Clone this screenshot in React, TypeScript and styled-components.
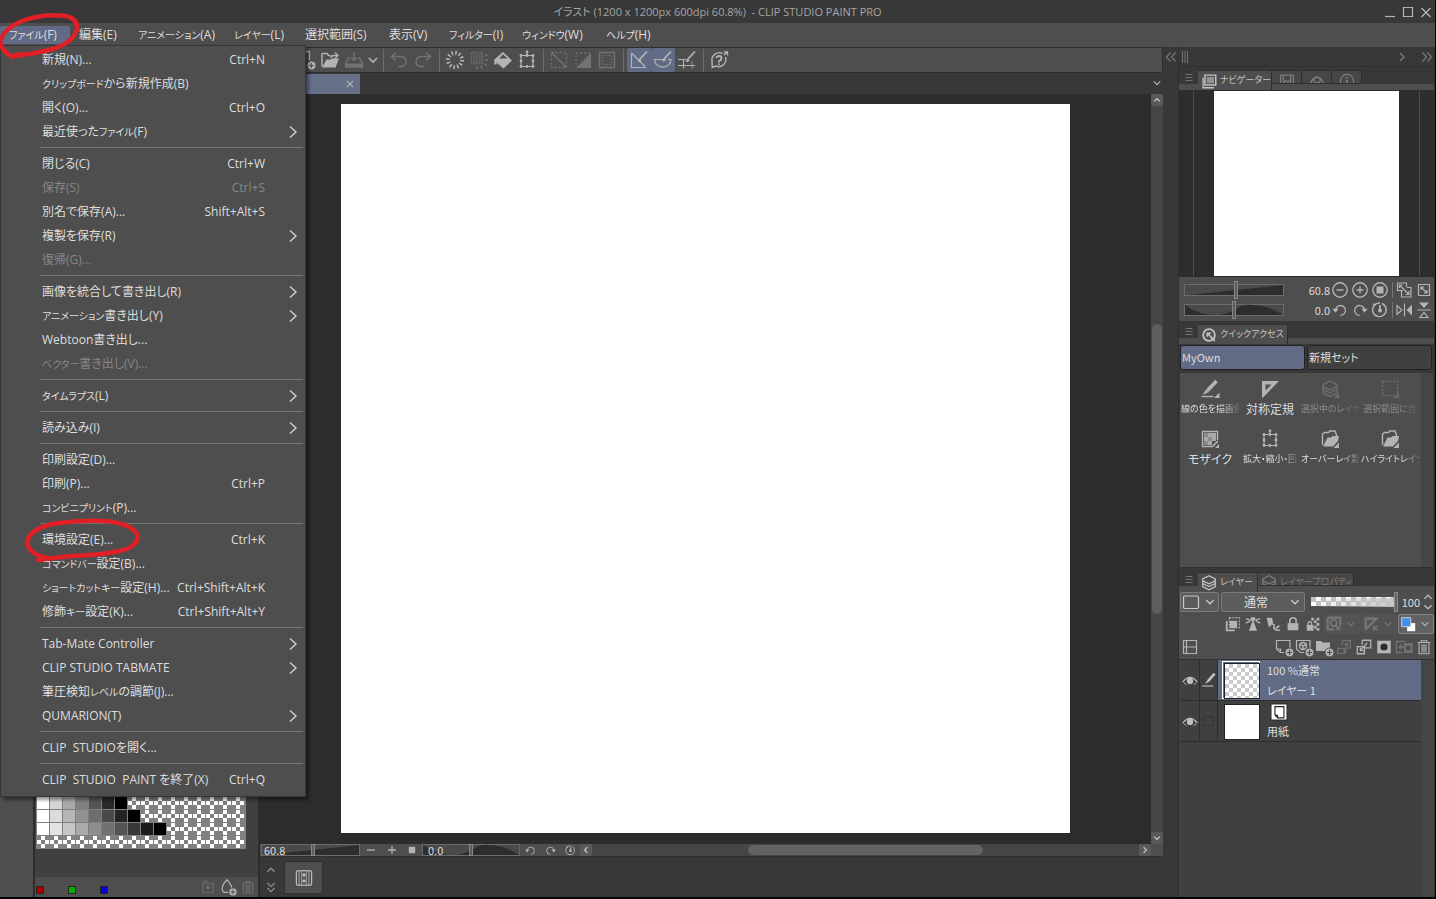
import React from "react";
import styled, { createGlobalStyle, css } from "styled-components";

const c = {
  bar: "#4e4e4e",
  dark: "#383838",
  line: "#2d2d2d",
  stage: "#2c2c2c",
  body: "#404040",
  scroll: "#454545",
  accent: "#616b85",
  text: "#dedede",
  icon: "#b4b4b4",
  dim: "#727272",
};

const uiFont = `"Open Sans", "Noto Sans CJK JP", sans-serif`;
const panelFont = `"Noto Sans CJK JP", "Noto Sans", sans-serif`;

const GlobalStyle = createGlobalStyle`
  * { box-sizing: border-box; }
  body { margin: 0; background: #000; }
  button, input, select {
    margin: 0; padding: 0; border: 0; background: none;
    font: inherit; color: inherit; border-radius: 0;
  }
  button { display: flex; align-items: center; justify-content: center; }
  ul { list-style: none; margin: 0; padding: 0; }
`;

/* ---------- icons ---------- */

const Svg = styled.svg<{ $size: number }>`
  display: block;
  flex: none;
  width: ${(p) => p.$size}px;
  height: ${(p) => p.$size}px;
  fill: none;
  stroke: currentColor;
  stroke-width: 1.4;
`;

const plusBadge = (
  <g>
    <circle cx="15.5" cy="15.5" r="4.5" fill="currentColor" stroke={c.bar} strokeWidth="1" />
    <path d="M15.5 13v5M13 15.5h5" stroke={c.bar} strokeWidth="1.2" />
  </g>
);

const lassoX = <path d="M12 12l5 5M17 12l-5 5" strokeWidth="1.8" />;

const icons: Record<string, React.ReactNode> = {
  newPage: <g><path d="M3 1.5h10.500v9" />{plusBadge}</g>,
  open: (
    <g>
      <path d="M2 16.500V4.500q0-1 1-1h4l1.500 2h2M14 5.500h3M15 2.500l3 3-3 3M11 8q0-2.500 3-2.500" />
      <path d="M2 17.500l4.500-8h4l1.500-1h7l-3.500 9z" fill="currentColor" stroke="none" />
    </g>
  ),
  save: (
    <g>
      <path d="M6 8H4.500L1.500 14v3h17v-3l-3-6H14M10 2v8M7 7.500l3 3 3-3" />
      <path d="M2 13.500h16v3.500H2z" fill="currentColor" stroke="none" />
    </g>
  ),
  down: <path d="M6 8l4 4 4-4" strokeWidth="1.6" />,
  up: <path d="M6 12l4-4 4 4" strokeWidth="1.6" />,
  right: <path d="M8 6l4 4-4 4" strokeWidth="1.6" />,
  left: <path d="M12 6l-4 4 4 4" strokeWidth="1.6" />,
  dblLeft: <path d="M9.500 5.500L5.500 10l4 4.500M14.500 5.500L10.500 10l4 4.500" />,
  dblRight: <path d="M5.500 5.500L9.500 10l-4 4.500M10.500 5.500l4 4.500-4 4.500" />,
  dblDown: <path d="M6 4.500l4 4 4-4M6 10l4 4 4-4" />,
  undo: <path d="M7 2.500L2.500 6.500 7 10.500M3 6.500h9q5 .5 5 5t-5 5H9" />,
  redo: <path d="M13 2.500l4.500 4-4.500 4M17 6.500H8q-5 .5-5 5t5 5h3" />,
  burst: <circle cx="10" cy="10" r="7" strokeWidth="4" strokeDasharray="1.5 2.170" />,
  burstBox: (
    <g>
      <path d="M2.500 2.500h11v11h-11z" strokeDasharray="1.500 1.500" />
      <path d="M4 4h9v9H4z" fill="currentColor" opacity=".35" stroke="none" />
      <path d="M16 10h3M15.500 14l2.500 2M12 15.500l1 3M8 16v3M16 6l2.500-1" />
    </g>
  ),
  bucket: (
    <g>
      <path d="M2.500 8.500L10 2l9 8.500-8.500 8-7-6z" fill="currentColor" stroke="none" />
      <path d="M6 8.500L10 4.500 14.500 8.500z" fill={c.bar} stroke="none" />
      <path d="M2.500 9v5.500" strokeWidth="2.500" />
    </g>
  ),
  transform: (
    <g>
      <path d="M4 5.500h12v11H4zM10 1v5" strokeWidth="1.200" />
      <g fill="currentColor" stroke="none">
        {[[4, 5.5], [16, 5.5], [4, 16.5], [16, 16.5], [10, 5.5], [10, 16.5], [4, 11], [16, 11], [10, 1.8]].map(
          ([x, y]) => <circle key={`${x}-${y}`} cx={x} cy={y} r="1.400" />
        )}
      </g>
    </g>
  ),
  deselect: <g><path d="M2.500 2.500h15v15h-15z" strokeDasharray="2 2" /><path d="M2.500 2.500l15 15" /></g>,
  invert: (
    <g>
      <path d="M17 3H3v14" strokeDasharray="2 2" />
      <path d="M18 3v15H3z" fill="currentColor" stroke="none" />
    </g>
  ),
  border: <g><path d="M2.500 2.500h15v15h-15z" /><path d="M5.500 5.500h9v9h-9z" strokeDasharray="1.500 1.500" /></g>,
  snapRuler: <g><path d="M2.500 3v14.500H17M2.500 3L16 16.500" strokeWidth="1.200" /><path d="M18 1.500l-7 7.500-1.500 2.500 2.500-1.500" strokeWidth="1.800" /></g>,
  snapCurve: <g><path d="M10 9.500H1.500a8.200 7.500 0 0016.500 0h-3" strokeWidth="1.200" /><path d="M18 1.500L11.500 8.500l-1.500 2.500 2.500-1.500" strokeWidth="1.800" /></g>,
  snapGrid: <g><path d="M1 15.500h17M6.500 9.500v9M1 9.500h8" strokeWidth="1.200" /><path d="M15 11v8" opacity=".6" strokeWidth="1" /><path d="M18 1.500l-7 7.500-1.500 2.500 2.500-1.500" strokeWidth="1.800" /></g>,
  help: (
    <g>
      <path d="M13.500 3.500A7.300 7.300 0 003 11l.2 6.500 3.500-1.500A7.300 7.300 0 0016.500 7M15 5l3-3M15 2h3.500v3.500" />
      <path d="M7.500 8q0-2 2.500-2t2.500 2-2.500 3v1.500M10 13.500v1.500" strokeWidth="1.800" />
    </g>
  ),
  close: <path d="M5.500 6l9 9M14.500 6l-9 9" />,
  closeSmall: <path d="M6.500 6.500l7 7M13.500 6.500l-7 7" strokeWidth="1.200" />,
  minimize: <path d="M5 14.500h10" strokeWidth="1.200" />,
  maximize: <path d="M5.500 5.500h9v9h-9z" strokeWidth="1.200" />,
  burger: <path d="M6.500 6.500h7M6.500 9.500h7M6.500 12.500h7" strokeWidth="1" />,
  grip: <path d="M7.500 4v12M10 4v12M12.500 4v12" strokeWidth="1" />,
  navigator: (
    <g>
      <path d="M3.500 6.500v11h12" />
      <path d="M5.500 3.500h12v11h-12z" strokeWidth="1.600" />
      <path d="M7.500 5.500h8v7h-8z" fill="currentColor" stroke="none" opacity=".6" />
    </g>
  ),
  subview: <g><path d="M3 3.500h14v15H3z" /><path d="M6 3.500v13M14 3.500v13M6 12l3-2.500 2 2 3-3" /></g>,
  material: <g><path d="M4 15a6.500 6.500 0 1112 0M6 14q4-4 8 0" strokeWidth="1.600" /><circle cx="10" cy="9" r="3.500" /></g>,
  info: <g><circle cx="10" cy="10" r="7.300" /><path d="M10 9v6M10 5.500v2" strokeWidth="2" /></g>,
  zoomOut: <g><circle cx="10" cy="10" r="7.200" /><path d="M6.500 10h7" /></g>,
  zoomIn: <g><circle cx="10" cy="10" r="7.200" /><path d="M6.500 10h7M10 6.500v7" /></g>,
  zoomFit: <g><circle cx="10" cy="10" r="7.200" /><path d="M6.500 6.500h7v7h-7z" fill="currentColor" stroke="none" /></g>,
  print: <g><path d="M9 10.500H3.500v-7.500h9v4M7.500 10v7h9.500V7.500h-4M5.500 5l9 9M5.500 8V5h3M15 11v3.500h-3.500" strokeWidth="1.200" /></g>,
  fit: <g><path d="M4.500 4.500h11v11h-11zM7 7l6 6M7 10V7h3M13 10v3h-3" strokeWidth="1.200" /></g>,
  rotL: <g><path d="M5 11a5.500 5.500 0 115.500 5" /><path d="M1.500 8.500h7L5 13z" fill="currentColor" stroke="none" /></g>,
  rotR: <g><path d="M15 11a5.500 5.500 0 10-5.500 5" /><path d="M18.500 8.500h-7L15 13z" fill="currentColor" stroke="none" /></g>,
  rotReset: (
    <g>
      <path d="M12 3.500A6.800 6.800 0 1110 3" />
      <path d="M10 5v5" strokeWidth="1.800" />
      <circle cx="10" cy="10.500" r="2" fill="currentColor" stroke="none" />
      <path d="M3 4l3 1" />
    </g>
  ),
  flipH: <g><path d="M3 5.500v9l5-4.500zM10.500 3.500v13" strokeWidth="1.200" /><path d="M18 4.500v11L12.500 10z" fill="currentColor" stroke="none" /></g>,
  flipV: <g><path d="M3.500 10h13M6 17.500h8L10 12.500z" strokeWidth="1.200" /><path d="M5 2.500h10L10 8z" fill="currentColor" stroke="none" /></g>,
  quick: <g><circle cx="10" cy="10" r="6.500" strokeWidth="2" /><path d="M8 12V8h4M8 8l8.500 8.500" strokeWidth="1.800" /></g>,
  pen: (
    <g>
      <path d="M17 2l-8 9" strokeWidth="3.400" />
      <path d="M8 10l2.500 2L5 15z" fill="currentColor" stroke="none" />
      <path d="M1.500 17.500h14" />
    </g>
  ),
  penTool: (
    <g>
      <path d="M16.500 2L7.500 11.500" strokeWidth="3.600" />
      <path d="M6 10.500l3 2.500-6.500 3z" fill="currentColor" stroke="none" />
      <path d="M1.500 17.500h12" />
      <path d="M19.500 13.500v5.500H14z" fill="currentColor" stroke="none" />
    </g>
  ),
  setSquare: <path d="M2 2H19L2 19.500zM5.500 5.500v6L11.500 5.500z" fill="currentColor" stroke="none" fillRule="evenodd" />,
  layers: (
    <g>
      <path d="M10 2l7 3.500v2L10 11 3 7.500v-2zM3 7.500v3l7 3.500 7-3.500v-3M3 11v3l7 3.500 7-3.500v-3" />
    </g>
  ),
  layersTool: (
    <g>
      <path d="M10 2l7 3.500v2L10 11 3 7.500v-2zM3 7.500v3l7 3.500 7-3.500v-3M3 11v3l7 3.500 7-3.500v-3" />
      <path d="M19 13.500v5.500h-5.500z" fill="currentColor" stroke="none" />
    </g>
  ),
  selectTool: (
    <g>
      <path d="M2.500 2.500h15v14h-15z" strokeDasharray="2 1.500" />
      <path d="M19 13.500v5.500h-5.500z" fill="currentColor" stroke="none" />
    </g>
  ),
  mosaic: (
    <g>
      <path d="M17.500 11V2.500H2.500v15H12" />
      <path d="M4 4h4v4H4zM8 8h4v4H8zM4 12h4v4H4z" fill="currentColor" stroke="none" opacity=".6" />
      <path d="M8 4h4v4H8zM4 8h4v4H4zM12 8h4v4h-4zM8 12h4v4H8zM12 4h4v4h-4z" fill="currentColor" stroke="none" opacity=".9" />
      <path d="M18 12l-6 6" strokeWidth="1.600" />
      <path d="M19 15v4h-4z" fill="currentColor" stroke="none" />
    </g>
  ),
  folderTool: (
    <g>
      <path d="M2.500 16V5l2-1.500h4l1.500-1.500h5l1.500 4v2" />
      <path d="M3 17.500L7.500 8.500h3.500l1.500-1.500h6.500l-1 5-5 5.500z" fill="currentColor" stroke="none" />
      <path d="M19 13.500v5.500h-5.500z" fill="currentColor" stroke="none" />
    </g>
  ),
  swatchFrame: <rect x="2.500" y="4" width="15" height="12.500" rx="1.500" strokeWidth="1.200" />,
  clip: <g><path d="M6 3h11v11H6z" strokeDasharray="2 1.500" /><path d="M3 7v10h9" strokeWidth="2" /><path d="M6.500 6.500h8v8h-8z" fill="currentColor" stroke="none" /></g>,
  reference: <g><path d="M10 5L5.500 17.500h9z" fill="currentColor" stroke="none" /><path d="M2 4l5 1.500M18 4L13 5.500M2 9l5-2.500M18 9l-5-2.500" /><path d="M7.500 2.500h5v4h-5z" fill="currentColor" stroke="none" /></g>,
  draft: <g><path d="M3 3h6l1 5-2 4H5z" fill="currentColor" stroke="none" /><path d="M6 8v5M9 10q3 0 2 3t4 4h3" strokeWidth="1.800" /><path d="M17 12l-4 3" strokeWidth="2" /></g>,
  lock: <g><path d="M6.500 9V6.500a3.500 3.500 0 017 0V9" strokeWidth="1.800" /><path d="M4 9h12v8H4z" fill="currentColor" stroke="none" /></g>,
  lockAlpha: (
    <g>
      <path d="M8 3h3v3H8zM14 3h3v3h-3zM11 6h3v3h-3zM14 9h3v3h-3zM11 12h3v3h-3zM14 14.500h3v3h-3z" fill="currentColor" stroke="none" />
      <path d="M4.500 11V9.500a2 2 0 014 0V11" />
      <path d="M3 11h7.500v6.500H3z" fill="currentColor" stroke="none" />
    </g>
  ),
  maskOff: <g><path d="M3 3h14v8M3 3v13h7" strokeWidth="2.400" /><circle cx="9.500" cy="9" r="3.500" strokeWidth="2" />{lassoX}</g>,
  rulerOff: <g><path d="M4 16V4h12L4 16" strokeWidth="2.400" />{lassoX}</g>,
  panels: <path d="M3.500 3.500h13v13h-13zM3.500 10h13M6.500 3.500v13" strokeWidth="1.200" />,
  newLayer: <g><path d="M10 15.500H6.500L2.500 12V3.500h13.500v8M2.500 12h4v3.500" strokeWidth="1.200" />{plusBadge}</g>,
  newVector: <g><path d="M10 15.500H6.500L2.500 12V3.500h13.500v8" strokeWidth="1.200" /><circle cx="9" cy="9" r="3.500" /><path d="M6 7l3 2 4-2M9 9v4" />{plusBadge}</g>,
  newFolder: <g><path d="M2 4h5l1.500 1.500H16V14H2z" fill="currentColor" stroke="none" />{plusBadge}</g>,
  transferDown: <g><path d="M8 3h9v8h-5M8 3v5M3 17h8v-5.500H3zM13 13l-3 1.500 3 1.500" /><path d="M11 5.500h3.500v3.500H11z" fill="currentColor" stroke="none" /></g>,
  mergeDown: <g><path d="M8 2.500h9.500v8.500H11M8 2.500v5M2.500 9.500h8v8h-8zM13.500 5.500L6 14M6 10.800V14h3.500" /></g>,
  mask: <g><path d="M2.500 3h15v14h-15z" fill="currentColor" stroke="none" /><circle cx="10" cy="10" r="4" fill={c.line} stroke="none" /></g>,
  maskApply: <g><path d="M9 15.500H2.500v-11H11M5 10h5M7.500 7.500L5 10l2.500 2.500" /><path d="M10 6h8.500v10H10z" fill="currentColor" stroke="none" /><circle cx="14.200" cy="11" r="2.500" fill={c.bar} stroke="none" /></g>,
  trash: <path d="M3 5h14M7 5V3h6v2M4.500 5v12.500h11V5M7.800 7v9M10 7v9M12.200 7v9" strokeWidth="1.200" />,
  colorPair: (
    <g stroke="none">
      <path d="M9 9h9v9H9z" fill="#fff" />
      <path d="M3 3h10v10H3z" fill="#3f8ef0" stroke="#d8d8d8" strokeWidth="1" />
    </g>
  ),
  eye: (
    <g>
      <path d="M2 12q8-10 16 0" strokeWidth="1.400" />
      <circle cx="10" cy="11" r="3.500" fill="currentColor" stroke="none" />
      <path d="M3 13q1.500 1.500 3 2M17 13q-1.500 1.500-3 2" strokeWidth="1" />
    </g>
  ),
  paper: (
    <g>
      <path d="M1 1h18v18H1z" fill="#fff" stroke={c.line} />
      <path d="M5.500 4h10v12.500H8.500L5.500 13z" stroke="#222" strokeWidth="1.200" />
      <path d="M5 13h4v4z" fill="#222" stroke="none" />
    </g>
  ),
  replace: <path d="M7 5.500H3.500v11h13v-11H13M4 2.500q6 0 6 3v6.500M7.500 9.500l2.500 3 2.500-3" strokeWidth="1.300" />,
  dropAdd: <g><path d="M9 2q5.500 6.500 5.500 10t-5.500 4-5.500-4T9 2z" />{plusBadge}</g>,
  timeline: <g><rect x="1.500" y="2" width="17" height="16" rx="1.500" strokeWidth="1.200" /><path d="M4.500 2v16M15.500 2v16M7.500 2v16M12.500 2v16" strokeWidth=".8" /><path d="M10 4.500l2 2.200-2 2.200-2-2.200zM10 11l2 2.200-2 2.200-2-2.200z" fill="currentColor" stroke="none" /></g>,
  minus: <path d="M5 10h10" strokeWidth="1.600" />,
  plus: <path d="M5 10h10M10 5v10" strokeWidth="1.600" />,
  stop: <path d="M6 6h8v8H6z" fill="currentColor" stroke="none" />,
};

const Icon = ({ name, size = 20 }: { name: string; size?: number }) => (
  <Svg viewBox="0 0 20 20" $size={size} aria-hidden="true">
    {icons[name]}
  </Svg>
);

/* Katakana runs are set smaller than kanji, as in a UI face with compact kana. */
const Kana = styled.span`
  font-size: 10px;
`;

const Label = ({ text }: { text: string }) => (
  <span>
    {text.split(/([ァ-ヶー]+)/).map((run, i) => (i % 2 ? <Kana key={i}>{run}</Kana> : run))}
  </span>
);

/* ---------- shell ---------- */

const Window = styled.div`
  position: relative;
  display: flex;
  flex-direction: column;
  height: 100vh;
  min-height: 800px;
  border-right: 1px solid #000;
  border-bottom: 2px solid #000;
  background: ${c.dark};
  color: ${c.text};
  font: 12px/16px ${uiFont};
  overflow: hidden;
`;

const TitleBar = styled.header`
  display: grid;
  grid-template-columns: 1fr auto 1fr;
  align-items: center;
  flex: none;
  height: 23px;
  color: #a6a6a6;
`;

const Title = styled.h1`
  grid-column: 2;
  margin: 0;
  font-size: 11px;
  font-weight: 400;
  white-space: pre;
  font-feature-settings: "palt";
`;

const WindowButtons = styled.div`
  display: flex;
  justify-content: flex-end;
`;

const IconButton = styled.button<{ $w?: number; $h?: number; $dim?: boolean; $on?: boolean }>`
  flex: none;
  width: ${(p) => p.$w ?? 20}px;
  height: ${(p) => p.$h ?? 20}px;
  color: ${(p) => (p.$dim ? c.dim : c.icon)};
  ${(p) => p.$on && css`background: ${c.accent}; border-radius: 2px;`}
`;

const MenuBar = styled.nav`
  display: flex;
  align-items: center;
  flex: none;
  height: 24px;
  background: ${c.bar};
`;

const MenuTitle = styled.button<{ $w: number; $open?: boolean }>`
  flex: none;
  width: ${(p) => p.$w}px;
  height: 18px;
  justify-content: flex-start;
  padding-left: 9px;
  border-radius: 2px;
  white-space: nowrap;
  font-feature-settings: "palt";
  background: ${(p) => (p.$open ? c.accent : "transparent")};
`;

const Workspace = styled.div`
  display: grid;
  grid-template-columns: 34px 226px minmax(0, 1fr) 16px 256px;
  grid-template-rows: minmax(0, 1fr);
  flex: 1;
  min-height: 0;
`;

/* ---------- file menu ---------- */

const Menu = styled.ul`
  position: absolute;
  top: 45px;
  left: 0;
  width: 306px;
  padding: 2px 0 4px;
  border: 1px solid #363636;
  background: ${c.bar};
  box-shadow: 3px 3px 3px rgba(0, 0, 0, 0.4);
  font-feature-settings: "palt";
`;

const MenuItem = styled.button<{ $dim?: boolean }>`
  display: grid;
  grid-template-columns: 1fr auto 22px;
  align-items: center;
  width: 100%;
  height: 24px;
  padding: 0 0 0 41px;
  text-align: left;
  white-space: pre;
  color: ${(p) => (p.$dim ? "#868686" : c.text)};
`;

const Shortcut = styled.span`
  grid-column: 2;
  margin-right: 18px;
`;

const Arrow = styled.span`
  grid-column: 3;
  color: #cfcfcf;
`;

const MenuRule = styled.li`
  height: 1px;
  margin: 3px 2px 4px 39px;
  background: #757575;
`;

type Entry = { label: string; key?: string; sub?: boolean; dim?: boolean } | null;

const fileMenu: Entry[] = [
  { label: "新規(N)...", key: "Ctrl+N" },
  { label: "クリップボードから新規作成(B)" },
  { label: "開く(O)...", key: "Ctrl+O" },
  { label: "最近使ったファイル(F)", sub: true },
  null,
  { label: "閉じる(C)", key: "Ctrl+W" },
  { label: "保存(S)", key: "Ctrl+S", dim: true },
  { label: "別名で保存(A)...", key: "Shift+Alt+S" },
  { label: "複製を保存(R)", sub: true },
  { label: "復帰(G)...", dim: true },
  null,
  { label: "画像を統合して書き出し(R)", sub: true },
  { label: "アニメーション書き出し(Y)", sub: true },
  { label: "Webtoon書き出し..." },
  { label: "ベクター書き出し(V)...", dim: true },
  null,
  { label: "タイムラプス(L)", sub: true },
  null,
  { label: "読み込み(I)", sub: true },
  null,
  { label: "印刷設定(D)..." },
  { label: "印刷(P)...", key: "Ctrl+P" },
  { label: "コンビニプリント(P)..." },
  null,
  { label: "環境設定(E)...", key: "Ctrl+K" },
  { label: "コマンドバー設定(B)..." },
  { label: "ショートカットキー設定(H)...", key: "Ctrl+Shift+Alt+K" },
  { label: "修飾キー設定(K)...", key: "Ctrl+Shift+Alt+Y" },
  null,
  { label: "Tab-Mate Controller", sub: true },
  { label: "CLIP STUDIO TABMATE", sub: true },
  { label: "筆圧検知レベルの調節(J)..." },
  { label: "QUMARION(T)", sub: true },
  null,
  { label: "CLIP  STUDIOを開く..." },
  null,
  { label: "CLIP  STUDIO  PAINT を終了(X)", key: "Ctrl+Q" },
];

const menuTitles: [string, number][] = [
  ["ファイル(F)", 70],
  ["編集(E)", 59],
  ["アニメーション(A)", 96],
  ["レイヤー(L)", 71],
  ["選択範囲(S)", 84],
  ["表示(V)", 60],
  ["フィルター(I)", 73],
  ["ウィンドウ(W)", 84],
  ["ヘルプ(H)", 66],
];

const RedPen = styled.svg`
  position: absolute;
  top: 0;
  left: 0;
  width: 160px;
  height: 580px;
  pointer-events: none;
  fill: none;
  stroke: #e01f26;
  stroke-width: 4.5;
  stroke-linecap: round;
  stroke-linejoin: round;
`;

/* ---------- left side ---------- */

const ToolStrip = styled.aside`
  background: ${c.bar};
  border-right: 1px solid ${c.line};
`;

const ColorPanel = styled.aside`
  display: flex;
  flex-direction: column;
  justify-content: flex-end;
  background: ${c.body};
  border: solid ${c.line};
  border-width: 0 2px 0 1px;
`;

const SwatchGrid = styled.div`
  display: grid;
  grid-template-columns: repeat(16, 12px);
  grid-auto-rows: 12px;
  gap: 1px;
  width: 210px;
  margin: 0 0 28px 1px;
  padding: 1px;
  background: #808080;
`;

const Swatch = styled.span<{ $color?: string }>`
  background: ${(p) =>
    p.$color ?? "repeating-conic-gradient(#fff 0 25%, #808080 0 50%) 0 0 / 8px 8px"};
`;

const swatchRows = [6, 7, 8, 10, 0].map((n) =>
  Array.from({ length: 16 }, (_, i) => {
    if (i >= n) return undefined;
    const v = Math.round(255 * (1 - i / (n - 1)));
    return `rgb(${v}, ${v}, ${v})`;
  })
);

const PanelFooter = styled.div`
  display: flex;
  align-items: center;
  height: 20px;
  padding-left: 1px;
  background: ${c.bar};
`;

const HistoryChip = styled.button<{ $color: string }>`
  width: 8px;
  height: 8px;
  margin: 6px 24px 0 0;
  border: 1px solid #222;
  background: ${(p) => p.$color};
`;

const FooterTools = styled.div`
  display: flex;
  margin-left: auto;
`;

/* ---------- canvas column ---------- */

const Center = styled.main`
  display: flex;
  flex-direction: column;
  min-width: 0;
`;

const CommandBar = styled.div`
  display: flex;
  align-items: center;
  flex: none;
  height: 26px;
  padding-left: 34px;
  border: solid ${c.line};
  border-width: 1px 1px 1px 0;
  background: ${c.bar};
`;

const BarRule = styled.span`
  width: 1px;
  height: 23px;
  margin: 0 3px 0 4px;
  background: #6d6d6d;
`;

const TabStrip = styled.div`
  display: flex;
  justify-content: space-between;
  flex: none;
  height: 21px;
`;

const DocumentTab = styled.div`
  display: flex;
  align-items: center;
  justify-content: flex-end;
  width: 100px;
  margin-top: 1px;
  background: #667089;
  color: #cfcfcf;
`;

const Stage = styled.div`
  display: grid;
  grid-template-columns: minmax(0, 1fr) 12px;
  flex: 1;
  min-height: 0;
  background: ${c.stage};
`;

const PaperArea = styled.div`
  display: flex;
  justify-content: center;
  padding: 10px 0 11px;
  min-height: 0;
`;

const Paper = styled.div`
  height: 100%;
  aspect-ratio: 1;
  background: #fff;
`;

const ScrollColumn = styled.div`
  display: flex;
  flex-direction: column;
  align-items: stretch;
  background: ${c.scroll};
`;

const ScrollButton = styled.button`
  width: 12px;
  height: 12px;
  flex: none;
  border-radius: 2px;
  background: #5a5a5a;
  color: #cfcfcf;
`;

const TrackV = styled.div`
  display: grid;
  grid-template-rows: 30fr 40fr 30fr;
  flex: 1;
  padding: 0 1px;
`;

const ThumbV = styled.div`
  grid-row: 2;
  border-radius: 5px;
  background: #5e5e5e;
`;

const StatusBar = styled.div`
  display: flex;
  align-items: center;
  flex: none;
  height: 12px;
  padding-left: 1px;
  background: ${c.bar};
  font: 11px/12px ${panelFont};
`;

const ScrollRow = styled.div`
  display: flex;
  flex: 1;
  justify-content: center;
  align-self: stretch;
  padding: 1px 0;
  background: ${c.scroll};
`;

const ThumbH = styled.div`
  width: 43%;
  border-radius: 5px;
  background: #636363;
`;

const Corner = styled.span`
  width: 12px;
`;

const TimelineDock = styled.div`
  display: flex;
  flex: none;
  height: 41px;
  padding: 4px 0 3px 2px;
  border-top: 1px solid #303030;
`;

const DockArrows = styled.div`
  display: flex;
  flex-direction: column;
  justify-content: space-between;
  width: 22px;
  color: #8a8a8a;
`;

const DockButton = styled.button`
  width: 39px;
  border: 1px solid #303030;
  background: ${c.bar};
  color: #c8c8c8;
`;

/* ---------- sliders ---------- */

const SliderFrame = styled.span<{ $w: number; $h: number }>`
  display: grid;
  flex: none;
  width: ${(p) => p.$w}px;
  height: ${(p) => p.$h}px;
  align-items: center;
  & > * { grid-area: 1 / 1; }
`;

const SliderArt = styled.svg`
  display: block;
  width: 100%;
  height: 12px;
`;

const Range = styled.input<{ $h: number }>`
  appearance: none;
  width: 100%;
  height: ${(p) => p.$h}px;
  &::-webkit-slider-thumb {
    appearance: none;
    width: 4px;
    height: ${(p) => p.$h}px;
    border: 1px solid #878787;
    background: #5c5c5c;
  }
`;

const SliderValue = styled.span<{ $inset: number }>`
  padding-left: ${(p) => p.$inset}px;
  z-index: 1;
  pointer-events: none;
`;

type SliderProps = {
  label: string;
  shape: "wedge" | "wave";
  value: number;
  width: number;
  height: number;
  text?: string;
};

const Slider = ({ label, shape, value, width, height, text }: SliderProps) => (
  <SliderFrame $w={width} $h={height}>
    <SliderArt viewBox="0 0 100 12" preserveAspectRatio="none" aria-hidden="true">
      <rect x=".5" y=".5" width="99" height="11" fill="#4a4a4a" stroke="#6c6c6c" />
      {shape === "wedge" ? (
        <path d="M5 11L99 1v10z" fill={c.line} />
      ) : (
        <path d="M1 1Q14 11 32 11H1zM36 11Q48 8 54 4T68 1Q84 1 99 11z" fill={c.line} />
      )}
    </SliderArt>
    <Range type="range" aria-label={label} min={0} max={100} defaultValue={value} $h={height} />
    {text && <SliderValue $inset={shape === "wave" ? 6 : 3}>{text}</SliderValue>}
  </SliderFrame>
);

/* ---------- right dock ---------- */

const Gutter = styled.div`
  display: flex;
  justify-content: center;
  align-items: flex-start;
  border-right: 1px solid #303030;
`;

const Dock = styled.aside`
  display: flex;
  flex-direction: column;
  min-height: 0;
  border-right: 1px solid #303030;
  font: 12px/16px ${panelFont};
`;

const DockTop = styled.div`
  display: flex;
  align-items: center;
  flex: none;
  height: 20px;
  margin-bottom: 3px;
  border-bottom: 1px solid #303030;
`;

const Spacer = styled.span`
  flex: 1;
`;

const PanelTabs = styled.div`
  display: flex;
  align-items: flex-start;
  flex: none;
  height: 20px;
  background: linear-gradient(${c.dark} 14px, ${c.bar} 14px);
`;

const PanelTab = styled.button<{ $active?: boolean; $w: number; $center?: boolean }>`
  width: ${(p) => p.$w}px;
  height: ${(p) => (p.$active ? 20 : 14)}px;
  gap: 2px;
  align-items: flex-start;
  justify-content: ${(p) => (p.$center ? "center" : "flex-start")};
  padding: 1px 0 0 ${(p) => (p.$center ? 0 : 2)}px;
  overflow: hidden;
  border-top: 1px solid #303030;
  border-right: 1px solid #303030;
  border-bottom: ${(p) => (p.$active ? 0 : 1)}px solid #303030;
  background: ${(p) => (p.$active ? c.bar : "#474747")};
  color: ${(p) => (p.$active ? "#c4c4c4" : "#7d7d7d")};
  font-size: 9px;
  line-height: 16px;
  white-space: nowrap;
  font-feature-settings: "palt";
`;

const Preview = styled.div`
  display: flex;
  flex: none;
  height: 187px;
  padding: 1px 14px;
  background: ${c.line};
`;

const ViewFrame = styled.div`
  display: flex;
  justify-content: center;
  flex: 1;
  border: solid #e01010;
  border-width: 0 1px;
`;

const Thumb = styled.div`
  width: 185px;
  background: #fff;
`;

const NavControls = styled.div`
  flex: none;
  height: 44px;
  padding: 3px 0 1px;
  margin-bottom: 3px;
  background: ${c.bar};
`;

const NavRow = styled.div`
  display: flex;
  align-items: center;
  height: 20px;
  padding-left: 5px;
`;

const NavValue = styled.output`
  flex: 1;
  text-align: right;
  font-size: 11px;
`;

const NavRule = styled.span`
  width: 1px;
  height: 16px;
  margin: 0 1px 0 2px;
  background: #777;
`;

const SetTabs = styled.div`
  display: grid;
  grid-template-columns: 1fr 1fr;
  gap: 2px;
  flex: none;
  padding: 1px 2px 2px 1px;
  margin-bottom: 1px;
`;

const SetTab = styled.button<{ $active?: boolean }>`
  height: 25px;
  justify-content: flex-start;
  padding: 0 0 2px 1px;
  border: 1px solid #222;
  border-radius: 3px;
  background: ${(p) => (p.$active ? c.accent : c.body)};
  font-size: 11px;
  font-feature-settings: "palt";
`;

const QuickPanel = styled.div`
  display: grid;
  grid-template-columns: minmax(0, 1fr) 12px;
  flex: none;
  height: 195px;
  margin: 0 1px 4px;
  background: linear-gradient(to left, ${c.scroll} 12px, ${c.bar} 12px);
  border-bottom: 1px solid #303030;
`;

const QuickGrid = styled.div`
  display: grid;
  grid-template-columns: repeat(4, 60px);
  grid-auto-rows: 50px;
  align-content: start;
  padding-top: 6px;
`;

const QuickItem = styled.button<{ $dim?: boolean }>`
  flex-direction: column;
  justify-content: flex-start;
  gap: 2px;
  min-width: 0;
  color: ${(p) => (p.$dim ? "#6c6c6c" : c.icon)};
`;

const QuickLabel = styled.span<{ $dim?: boolean; $fade?: boolean }>`
  max-width: 58px;
  white-space: nowrap;
  font-feature-settings: "palt";
  font-size: ${(p) => (p.$fade ? 9 : 12)}px;
  color: ${(p) => (p.$dim ? "#8a8a8a" : c.text)};
  ${(p) => p.$fade && css`mask-image: linear-gradient(to right, #000 70%, rgba(0, 0, 0, 0.2));`}
`;

const quickItems = [
  { icon: "penTool", label: "線の色を描画色", fade: true },
  { icon: "setSquare", label: "対称定規" },
  { icon: "layersTool", label: "選択中のレイヤ", fade: true, dim: true },
  { icon: "selectTool", label: "選択範囲に含", fade: true, dim: true },
  { icon: "mosaic", label: "モザイク" },
  { icon: "transform", label: "拡大・縮小・回", fade: true },
  { icon: "folderTool", label: "オーバーレイ影", fade: true },
  { icon: "folderTool", label: "ハイライトレイヤ", fade: true },
];

const LayerPanel = styled.div`
  display: flex;
  flex-direction: column;
  flex: none;
  padding-bottom: 1px;
  background: ${c.bar};
  border-bottom: 1px solid #303030;
`;

const LayerRow = styled.div`
  display: flex;
  align-items: center;
  height: 23px;
  padding-left: 1px;
`;

const BlendRow = styled(LayerRow)`
  height: 20px;
  gap: 2px;
  padding-right: 1px;
`;

const Combo = styled.div<{ $w: number }>`
  display: flex;
  flex: none;
  align-items: center;
  justify-content: space-between;
  width: ${(p) => p.$w}px;
  height: 20px;
  border: 1px solid #7a7a7a;
  border-radius: 2px;
  background: #5c5c5c;
  color: #c8c8c8;
`;

const BlendSelect = styled.select`
  appearance: none;
  flex: 1;
  min-width: 0;
  height: 18px;
  padding-left: 22px;
  color: ${c.text};
`;

const OpacityRange = styled.input`
  appearance: none;
  flex: none;
  width: 87px;
  height: 20px;
  margin-left: 4px;
  background:
    linear-gradient(to right, transparent, #c4c4c4) 0 50% / 100% 9px no-repeat,
    repeating-conic-gradient(#fff 0 25%, #c0c0c0 0 50%) 0 5px / 10px 9px repeat-x;
  &::-webkit-slider-thumb {
    appearance: none;
    width: 4px;
    height: 20px;
    border: 1px solid #8a8a8a;
    background: #666;
  }
`;

const OpacityValue = styled.span`
  flex: 1;
  text-align: right;
  font-size: 11px;
`;

const Spinner = styled.div`
  display: flex;
  flex-direction: column;
  width: 11px;
`;

const DropButton = styled.button<{ $light?: boolean }>`
  width: 36px;
  height: 20px;
  margin-left: 1px;
  border: 1px solid ${(p) => (p.$light ? "#858585" : "#535353")};
  border-radius: 2px;
  background: ${(p) => (p.$light ? "#626262" : "#535353")};
  color: ${(p) => (p.$light ? "#b4b4b4" : "#777")};
`;

const LayerList = styled.ul`
  flex: 1;
  min-height: 0;
  padding-left: 1px;
  background: linear-gradient(to left, ${c.scroll} 13px, ${c.body} 13px);
`;

const LayerItem = styled.li`
  display: grid;
  grid-template-columns: 20px 18px minmax(0, 1fr);
  height: 41px;
  margin-right: 13px;
  border-bottom: 1px solid ${c.line};
`;

const LayerFlag = styled.button`
  border-right: 1px solid ${c.line};
  color: #c0c0c0;
`;

const EmptyFlag = styled.span`
  width: 11px;
  height: 10px;
  border: 1px solid #333;
  border-radius: 2px;
`;

const LayerBody = styled.div<{ $selected?: boolean }>`
  display: flex;
  align-items: center;
  gap: 7px;
  padding-left: 4px;
  background: ${(p) => (p.$selected ? c.accent : "transparent")};
`;

const LayerThumb = styled.span<{ $selected?: boolean }>`
  flex: none;
  width: 38px;
  height: 38px;
  border: 1px solid ${(p) => (p.$selected ? "#fff" : "transparent")};
  padding: 1px;
  &::before {
    content: "";
    display: block;
    width: 34px;
    height: 34px;
    border: 1px solid #222;
    background: ${(p) =>
      p.$selected ? "repeating-conic-gradient(#ccc 0 25%, #fff 0 50%) 0 0 / 8px 8px" : "#fff"};
  }
`;

const LayerText = styled.div`
  display: flex;
  flex-direction: column;
  line-height: 20px;
  white-space: nowrap;
  font-size: 11px;
  font-feature-settings: "palt";
`;

const PaperMark = styled.span`
  padding: 1px 0 0 3px;
`;

/* ---------- app ---------- */

type Cmd = { icon: string; label: string; dim?: boolean; on?: boolean; w?: number } | null;

const commands: Cmd[] = [
  { icon: "newPage", label: "新規" },
  { icon: "open", label: "開く" },
  { icon: "save", label: "保存", dim: true },
  { icon: "down", label: "保存メニュー", w: 13 },
  null,
  { icon: "undo", label: "取り消し", dim: true },
  { icon: "redo", label: "やり直し", dim: true },
  null,
  { icon: "burst", label: "消去" },
  { icon: "burstBox", label: "選択範囲外を消去", dim: true },
  { icon: "bucket", label: "塗りつぶし" },
  { icon: "transform", label: "拡大・縮小・回転" },
  null,
  { icon: "deselect", label: "選択を解除", dim: true },
  { icon: "invert", label: "選択範囲を反転", dim: true },
  { icon: "border", label: "選択範囲の境界線を表示", dim: true },
  null,
  { icon: "snapRuler", label: "定規にスナップ", on: true },
  { icon: "snapCurve", label: "特殊定規にスナップ", on: true },
  { icon: "snapGrid", label: "グリッドにスナップ" },
  null,
  { icon: "help", label: "サポート" },
];

export default function App() {
  return (
    <>
      <GlobalStyle />
      <Window>
        <TitleBar>
          <Title>{"イラスト (1200 x 1200px 600dpi 60.8%)  - CLIP STUDIO PAINT PRO"}</Title>
          <WindowButtons>
            {["minimize", "maximize", "close"].map((n) => (
              <IconButton key={n} $w={18} aria-label={n}>
                <Icon name={n} size={20} />
              </IconButton>
            ))}
          </WindowButtons>
        </TitleBar>

        <MenuBar>
          {menuTitles.map(([label, w], i) => (
            <MenuTitle key={label} $w={w} $open={i === 0}>
              <Label text={label} />
            </MenuTitle>
          ))}
        </MenuBar>

        <Workspace>
          <ToolStrip />
          <ColorPanel>
            <SwatchGrid>
              {swatchRows.flat().map((color, i) => (
                <Swatch key={i} $color={color} />
              ))}
            </SwatchGrid>
            <PanelFooter>
              {["#b00000", "#00b000", "#0000e0"].map((color) => (
                <HistoryChip key={color} $color={color} aria-label={color} />
              ))}
              <FooterTools>
                <IconButton $dim aria-label="色を置き換え"><Icon name="replace" size={16} /></IconButton>
                <IconButton aria-label="色を追加"><Icon name="dropAdd" size={18} /></IconButton>
                <IconButton $dim aria-label="色を削除"><Icon name="trash" size={16} /></IconButton>
              </FooterTools>
            </PanelFooter>
          </ColorPanel>

          <Center>
            <CommandBar>
              {commands.map((cmd, i) =>
                cmd ? (
                  <IconButton key={i} $w={cmd.w ?? 24} $h={24} $dim={cmd.dim} $on={cmd.on} aria-label={cmd.label}>
                    <Icon name={cmd.icon} />
                  </IconButton>
                ) : (
                  <BarRule key={i} />
                )
              )}
            </CommandBar>
            <TabStrip>
              <DocumentTab>
                <IconButton aria-label="閉じる"><Icon name="closeSmall" size={18} /></IconButton>
              </DocumentTab>
              <IconButton $w={12} aria-label="タブ一覧"><Icon name="down" size={16} /></IconButton>
            </TabStrip>
            <Stage>
              <PaperArea>
                <Paper />
              </PaperArea>
              <ScrollColumn>
                <ScrollButton aria-label="上へ"><Icon name="up" size={14} /></ScrollButton>
                <TrackV>
                  <ThumbV />
                </TrackV>
                <ScrollButton aria-label="下へ"><Icon name="down" size={14} /></ScrollButton>
              </ScrollColumn>
            </Stage>
            <StatusBar>
              <Slider label="表示倍率" shape="wedge" value={53} width={99} height={12} text="60.8" />
              <IconButton $w={22} $h={12} aria-label="縮小"><Icon name="minus" size={16} /></IconButton>
              <IconButton $h={12} aria-label="拡大"><Icon name="plus" size={16} /></IconButton>
              <IconButton $h={12} aria-label="100%"><Icon name="stop" size={16} /></IconButton>
              <Slider label="回転" shape="wave" value={50} width={98} height={12} text="0.0" />
              <IconButton $h={12} aria-label="左回転"><Icon name="rotL" size={13} /></IconButton>
              <IconButton $h={12} aria-label="右回転"><Icon name="rotR" size={13} /></IconButton>
              <IconButton $h={12} aria-label="回転をリセット"><Icon name="rotReset" size={13} /></IconButton>
              <ScrollButton aria-label="左へ"><Icon name="left" size={14} /></ScrollButton>
              <ScrollRow>
                <ThumbH />
              </ScrollRow>
              <ScrollButton aria-label="右へ"><Icon name="right" size={14} /></ScrollButton>
              <Corner />
            </StatusBar>
            <TimelineDock>
              <DockArrows>
                <Icon name="up" size={18} />
                <Icon name="dblDown" size={18} />
              </DockArrows>
              <DockButton aria-label="タイムライン"><Icon name="timeline" size={18} /></DockButton>
            </TimelineDock>
          </Center>

          <Gutter>
            <IconButton $dim $w={16} aria-label="パレットを閉じる"><Icon name="dblLeft" /></IconButton>
          </Gutter>

          <Dock>
            <DockTop>
              <IconButton $dim $w={12} aria-label="移動"><Icon name="grip" /></IconButton>
              <Spacer />
              <IconButton $dim $w={36} aria-label="折りたたむ"><Icon name="right" /></IconButton>
              <IconButton $dim $w={14} aria-label="最小化"><Icon name="dblRight" /></IconButton>
            </DockTop>

            <PanelTabs>
              <IconButton $dim $w={19} $h={16} aria-label="メニュー"><Icon name="burger" /></IconButton>
              <PanelTab $active $w={74}><Icon name="navigator" size={18} />ナビゲーター</PanelTab>
              <PanelTab $center $w={30} aria-label="サブビュー"><Icon name="subview" size={18} /></PanelTab>
              <PanelTab $center $w={30} aria-label="素材"><Icon name="material" size={18} /></PanelTab>
              <PanelTab $center $w={30} aria-label="情報"><Icon name="info" size={18} /></PanelTab>
            </PanelTabs>
            <Preview>
              <ViewFrame>
                <Thumb />
              </ViewFrame>
            </Preview>
            <NavControls>
              <NavRow>
                <Slider label="表示倍率" shape="wedge" value={52} width={100} height={18} />
                <NavValue>60.8</NavValue>
                <IconButton aria-label="縮小"><Icon name="zoomOut" /></IconButton>
                <IconButton aria-label="拡大"><Icon name="zoomIn" /></IconButton>
                <IconButton aria-label="100%"><Icon name="zoomFit" /></IconButton>
                <NavRule />
                <IconButton aria-label="フィッティング"><Icon name="print" /></IconButton>
                <IconButton aria-label="全体表示"><Icon name="fit" /></IconButton>
              </NavRow>
              <NavRow>
                <Slider label="回転" shape="wave" value={50} width={100} height={18} />
                <NavValue>0.0</NavValue>
                <IconButton aria-label="左回転"><Icon name="rotL" size={18} /></IconButton>
                <IconButton aria-label="右回転"><Icon name="rotR" size={18} /></IconButton>
                <IconButton aria-label="回転をリセット"><Icon name="rotReset" /></IconButton>
                <NavRule />
                <IconButton aria-label="左右反転"><Icon name="flipH" /></IconButton>
                <IconButton aria-label="上下反転"><Icon name="flipV" /></IconButton>
              </NavRow>
            </NavControls>

            <PanelTabs>
              <IconButton $dim $w={19} $h={16} aria-label="メニュー"><Icon name="burger" /></IconButton>
              <PanelTab $active $w={90}><Icon name="quick" size={18} />クイックアクセス</PanelTab>
            </PanelTabs>
            <SetTabs>
              <SetTab $active>MyOwn</SetTab>
              <SetTab>新規セット</SetTab>
            </SetTabs>
            <QuickPanel>
              <QuickGrid>
                {quickItems.map((q) => (
                  <QuickItem key={q.label} $dim={q.dim}>
                    <Icon name={q.icon} />
                    <QuickLabel $dim={q.dim} $fade={q.fade}>{q.label}</QuickLabel>
                  </QuickItem>
                ))}
              </QuickGrid>
            </QuickPanel>

            <LayerPanel>
              <PanelTabs>
                <IconButton $dim $w={19} $h={16} aria-label="メニュー"><Icon name="burger" /></IconButton>
                <PanelTab $active $w={60}><Icon name="layers" size={18} />レイヤー</PanelTab>
                <PanelTab $w={96}><Icon name="layers" size={18} />レイヤープロパティ</PanelTab>
              </PanelTabs>
              <BlendRow>
                <Combo as="button" $w={39} aria-label="パレットカラー">
                  <Icon name="swatchFrame" />
                  <Icon name="down" size={18} />
                </Combo>
                <Combo $w={84}>
                  <BlendSelect aria-label="合成モード" defaultValue="通常">
                    <option>通常</option>
                  </BlendSelect>
                  <Icon name="down" size={18} />
                </Combo>
                <OpacityRange type="range" aria-label="不透明度" defaultValue={100} />
                <OpacityValue>100</OpacityValue>
                <Spinner>
                  <IconButton $w={11} $h={10} aria-label="増やす"><Icon name="up" size={18} /></IconButton>
                  <IconButton $w={11} $h={10} aria-label="減らす"><Icon name="down" size={18} /></IconButton>
                </Spinner>
              </BlendRow>
              <LayerRow>
                <Spacer />
                {["clip", "reference", "draft", "lock", "lockAlpha"].map((n) => (
                  <IconButton key={n} aria-label={n}><Icon name={n} size={18} /></IconButton>
                ))}
                <DropButton aria-label="マスクの有効化"><Icon name="maskOff" size={18} /><Icon name="down" size={16} /></DropButton>
                <DropButton aria-label="定規の表示"><Icon name="rulerOff" size={18} /><Icon name="down" size={16} /></DropButton>
                <DropButton $light aria-label="レイヤーカラー"><Icon name="colorPair" size={18} /><Icon name="down" size={16} /></DropButton>
              </LayerRow>
              <LayerRow>
                <IconButton aria-label="2ペイン"><Icon name="panels" /></IconButton>
                <Spacer />
                <IconButton aria-label="新規ラスターレイヤー"><Icon name="newLayer" /></IconButton>
                <IconButton aria-label="新規ベクターレイヤー"><Icon name="newVector" /></IconButton>
                <IconButton aria-label="新規フォルダー"><Icon name="newFolder" /></IconButton>
                <IconButton $dim aria-label="下に転写"><Icon name="transferDown" size={18} /></IconButton>
                <IconButton aria-label="下に結合"><Icon name="mergeDown" size={18} /></IconButton>
                <IconButton aria-label="マスクを作成"><Icon name="mask" size={18} /></IconButton>
                <IconButton $dim aria-label="マスクを適用"><Icon name="maskApply" /></IconButton>
                <IconButton aria-label="レイヤーを削除"><Icon name="trash" size={18} /></IconButton>
              </LayerRow>
            </LayerPanel>

            <LayerList>
              <LayerItem>
                <LayerFlag aria-label="表示"><Icon name="eye" size={18} /></LayerFlag>
                <LayerFlag aria-label="編集対象"><Icon name="pen" size={16} /></LayerFlag>
                <LayerBody $selected>
                  <LayerThumb $selected />
                  <LayerText>
                    <span>100 %通常</span>
                    <span>レイヤー 1</span>
                  </LayerText>
                </LayerBody>
              </LayerItem>
              <LayerItem>
                <LayerFlag aria-label="表示"><Icon name="eye" size={18} /></LayerFlag>
                <LayerFlag aria-label="編集対象にする"><EmptyFlag /></LayerFlag>
                <LayerBody>
                  <LayerThumb />
                  <LayerText>
                    <PaperMark><Icon name="paper" size={18} /></PaperMark>
                    <span>用紙</span>
                  </LayerText>
                </LayerBody>
              </LayerItem>
            </LayerList>
          </Dock>
        </Workspace>

        <Menu>
          {fileMenu.map((e, i) =>
            e ? (
              <li key={i}>
                <MenuItem $dim={e.dim}>
                  <Label text={e.label} />
                  {e.key && <Shortcut>{e.key}</Shortcut>}
                  {e.sub && <Arrow><Svg viewBox="0 0 20 20" $size={20}><path d="M7 4.500l6 5.500-6 5.500" /></Svg></Arrow>}
                </MenuItem>
              </li>
            ) : (
              <MenuRule key={i} role="separator" />
            )
          )}
        </Menu>

        <RedPen viewBox="0 0 160 580" aria-hidden="true">
          <path d="M13 57Q2 52 0 42 3 29 22 21 44 13 66 16 78 19 77 29 74 41 56 48 36 54 13 56L22 54" />
          <path d="M48 558Q30 555 27 543 28 530 52 524 80 520 104 521 130 523 137 534 140 544 124 550 104 555 72 556 52 558 38 560" />
        </RedPen>
      </Window>
    </>
  );
}
